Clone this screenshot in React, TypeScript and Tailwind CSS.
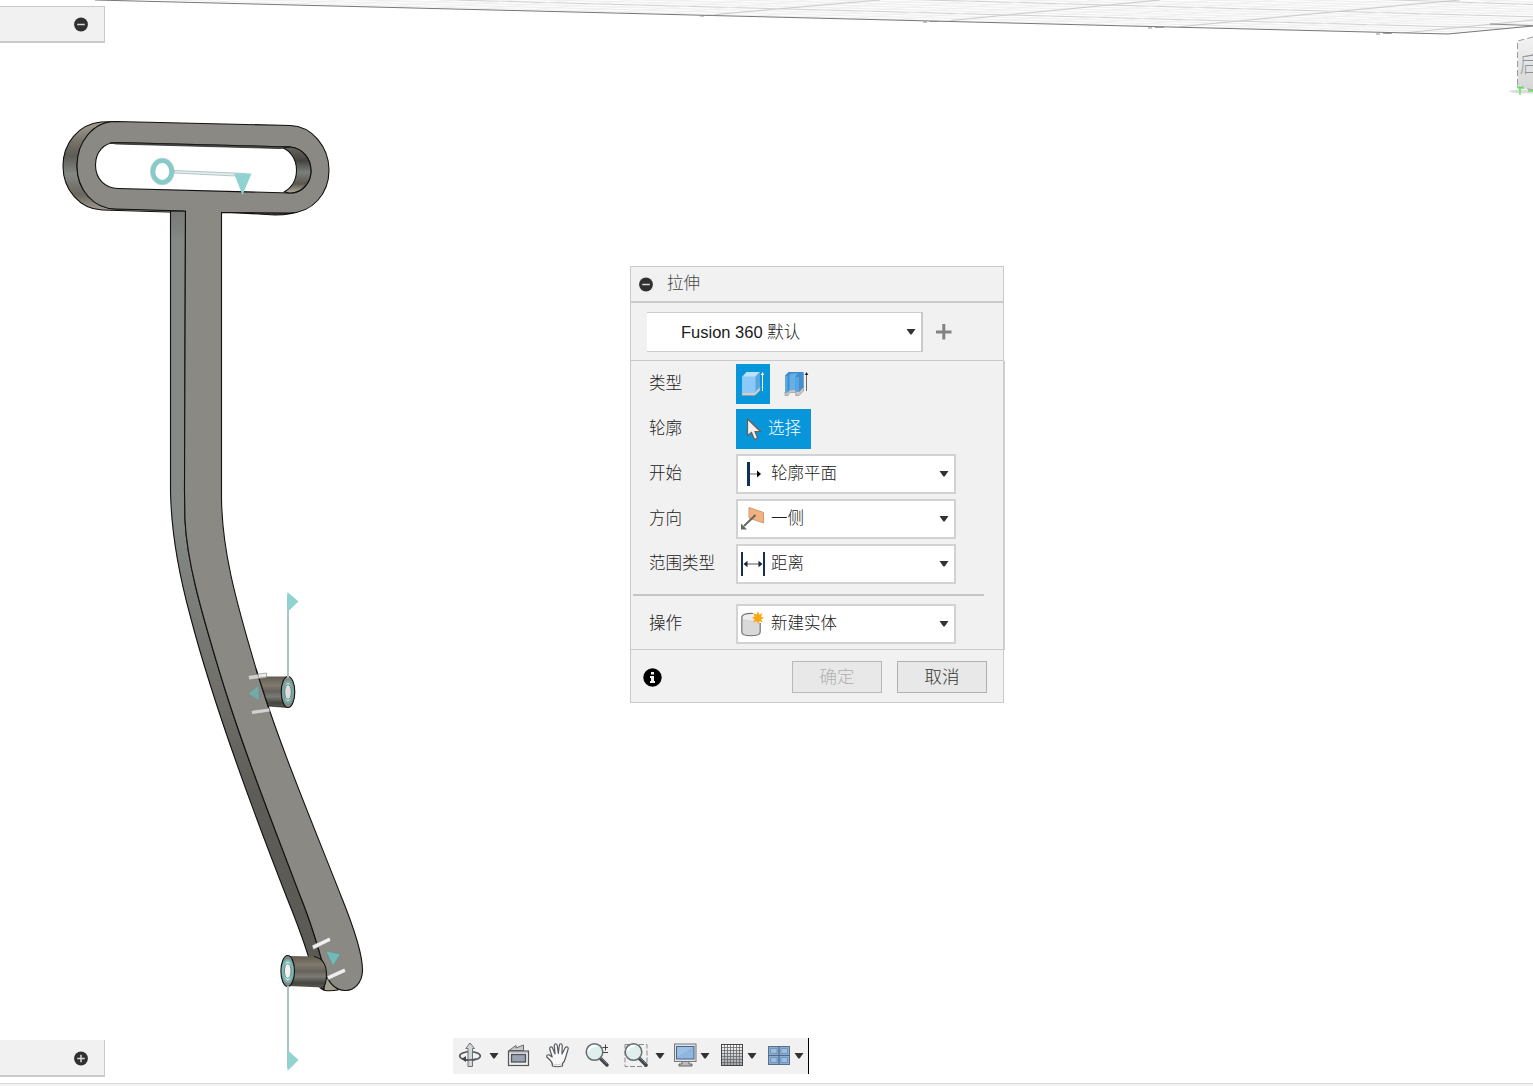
import React from "react";

const FONT = "font-['Liberation_Sans','Noto_Sans_CJK_SC',sans-serif]";

function Caret() {
  return (
    <svg className="block shrink-0" width="10" height="6" viewBox="0 0 10 6">
      <path d="M0.5 0H9.5L5.6 5.6H4.4Z" fill="#333" />
    </svg>
  );
}

function RoundToggle({ plus = false }: { plus?: boolean }) {
  return (
    <svg className="block shrink-0 translate-y-[0.5px]" width="16" height="16" viewBox="0 0 16 16">
      <circle cx="8" cy="8" r="6.9" fill="#303030" />
      <path d={plus ? "M4.2 8H11.8M8 4.2V11.8" : "M4.2 8H11.8"} stroke="#d8d8d8" strokeWidth="1.5" />
    </svg>
  );
}

function Grid() {
  const rows = Array.from({ length: 17 }, (_, i) => i);
  const dashes = [
    [702, 16], [925, 22], [1150, 28], [1378, 34],
  ];
  return (
    <g fill="none">
      <clipPath id="floor">
        <path d="M100 -1L1448 34L1533 26V-1Z" />
      </clipPath>
      <g clipPath="url(#floor)">
        <path d="M100 -1L1448 34L1533 26V-1Z" fill="#fcfcfc" />
        {rows.map((i) => (
          <path
            key={"a" + i}
            d={`M${130 + i * 95} ${-1}L1533 ${36.4 - i * 2.45}`}
            stroke={i % 5 === 3 ? "#cacaca" : "#ebebeb"}
            strokeWidth={i % 5 === 3 ? 0.9 : 0.8}
          />
        ))}
        {rows.concat([17, 18, 19, 20, 21, 22]).map((i) => (
          <path
            key={"b" + i}
            d={`M${300 + i * 46} ${4 + i * 1.2}l420 -41`}
            stroke="#ededed"
            strokeWidth="0.8"
          />
        ))}
        <path d="M715 14.500L880 0M951 20.500L1160 0M1180 26.700L1400 5.500L1460 0M1403 33L1533 20" stroke="#c6c6c6" strokeWidth="0.9" />
      </g>
      <path d="M95 0L1400 32.800L1448 34L1533 26" stroke="#777" />
      <path d="M1490 24L1533 25.600" stroke="#888" />
      {dashes.map(([x, y]) => (
        <path key={x} d={`M${x - 2} ${y}h4m3 -.6h9`} stroke="#888" strokeWidth=".9" />
      ))}
    </g>
  );
}

function Model() {
  return (
    <g stroke="#111" strokeWidth="1.1" strokeLinejoin="round">
      <path d="M116 121.500L101 122C79 124 63 143 63 166C63 190 80 209 102 210L184 212.500V210.500L116 209C94 209 77 190 77 166C77 142 93 121.500 116 121.500Z" fill="url(#capSide)" />
      <path d="M222 212L275 215Q292 215 302 210L289 213Z" fill="#4a4945" />
      <path d="M319 985Q320 993 338 990L330 975Z" fill="#a39e92" />
      <path
        d="M170.500 211V490C171 530 177 567 190 615C212 700 251 806 287 898Q300 930 308 955Q312 980 324 990L325 972C318 946 310 920 301 898C270 817 240 740 219 670C200 607 187 561 185 520L184.500 490L185.500 211Z"
        fill="url(#armSide)"
      />
      <path
        fillRule="evenodd"
        fill="#8b8983"
        d="M116 121.500L290 125.500C312 126 329 147 329 170C329 194 312 213 289 213L221.500 212.500V498C222 548 234 595 257 672C279 744 314 827 341 896Q363 950 362.500 971C362 983 354 991 345 990.500C336 990 329 984 325 972C318 946 310 920 301 898C270 817 240 740 219 670C200 607 187 561 185 520L184.500 490L185.500 211L116 209C94 209 77 190 77 166C77 142 93 121.500 116 121.500Z
        M116 142.500L290 147C303 148 311 159 311 171C311 183 302 193 290 193L118 188.500C105 188 95.500 179 95.500 165C95.500 152 104 142.500 116 142.500Z"
      />
      <path d="M280 147L290 147C303 148 311 159 311 171C311 183 302 193 290 193L284 192C293 187 296.500 180 296.500 170C296.500 158 289 149 280 147Z" fill="url(#slotSide)" />
      <path d="M110 142.800L116 144L280 148.500L290 147L116 142.500Z" fill="#55534f" strokeWidth=".7" />

      <path d="M257.500 676.500L288 676.500V707.500L267.500 706Z" fill="url(#pin)" stroke="none" />
      <path d="M256 669L269 709" fill="none" />
      <path d="M268 706L288 707.500" fill="none" strokeWidth=".6" />
      <ellipse cx="288" cy="692" rx="6.800" ry="15.500" fill="#8b8983" />
      <path d="M288 956L316 956.500Q327 961 326.500 976Q326 985 323 987.500L288 986Z" fill="url(#pin)" stroke="none" />
      <path d="M314 956.500Q327 959 326.500 976Q326 985 323 987.500" fill="none" />
      <ellipse cx="287.700" cy="971" rx="6.800" ry="15.500" fill="#858985" />
    </g>
  );
}

function Markers() {
  return (
    <g>
      <path d="M174 170.500L246 173.500V176.500L174 173Z" fill="#e1eceb" stroke="#a5bdbc" strokeWidth=".8" />
      <ellipse cx="162.300" cy="171.500" rx="9.300" ry="10.700" fill="#fff" stroke="#a9b5b4" strokeWidth="6" opacity=".6" />
      <ellipse cx="162.300" cy="171.500" rx="9.300" ry="10.700" fill="#fff" stroke="#86cbca" strokeWidth="4.600" />
      <path d="M234 173.500H251.500L242.500 195Z" fill="#8fd3d1" />

      <path d="M288 594V678M288 986V1068" stroke="#adc2c3" strokeWidth="2" />
      <path d="M287.500 592L298.500 601.500L287.500 612ZM287.500 1050L298.500 1060L287.500 1071Z" fill="#91d3d1" />
      <g strokeWidth="2.500">
        <ellipse cx="288" cy="692" rx="4.700" ry="10.500" fill="#dedfdd" stroke="#70aaa7" />
        <ellipse cx="287.700" cy="971" rx="4.700" ry="10.500" fill="#f3f3f3" stroke="#70bdb9" />
      </g>
      <g fill="none" stroke="#666" strokeWidth=".8">
        <ellipse cx="288" cy="692" rx="3.300" ry="7.500" />
        <ellipse cx="287.700" cy="971" rx="3.300" ry="7.500" />
      </g>
      <path d="M248 693.500L259 685V701Z" fill="#72aaa7" stroke="#728783" strokeWidth=".6" />
      <path d="M326 951L340.500 954L333 966Z" fill="#70bbb8" stroke="#678a87" strokeWidth=".6" />
      <g stroke="#777" strokeWidth=".6">
        <path d="M248 675.500L266.500 673V677.500L249 680Z" fill="#e8e8e5" fillOpacity=".75" />
        <path d="M251 710.500L269.500 708V712L252 714.500Z" fill="#d2d2cf" />
        <path d="M312 945.500L329.500 937L331 941L313.500 949.500Z" fill="#eee" />
        <path d="M327 976L344.500 968L346 972L328.500 980Z" fill="#eee" />
      </g>
    </g>
  );
}

function Viewport() {
  return (
    <svg className="absolute inset-0 block" width="1533" height="1086" viewBox="0 0 1533 1086">
      <defs>
        <linearGradient id="capSide" x1="0" y1="0" x2="0" y2="1">
          <stop offset="0" stopColor="#a5a091" />
          <stop offset=".22" stopColor="#777268" />
          <stop offset=".38" stopColor="#5e5c57" />
          <stop offset=".58" stopColor="#858983" />
          <stop offset=".8" stopColor="#69665e" />
          <stop offset="1" stopColor="#aaa495" />
        </linearGradient>
        <linearGradient id="slotSide" x1="0" y1="0" x2="0" y2="1">
          <stop offset="0" stopColor="#69655c" />
          <stop offset=".3" stopColor="#45433f" />
          <stop offset=".55" stopColor="#7b7f7b" />
          <stop offset=".8" stopColor="#5c5850" />
          <stop offset="1" stopColor="#b5ae9f" />
        </linearGradient>
        <linearGradient id="armSide" x1="0" y1="211" x2="0" y2="992" gradientUnits="userSpaceOnUse">
          <stop offset="0" stopColor="#777a77" />
          <stop offset=".04" stopColor="#858a86" />
          <stop offset=".4" stopColor="#858a86" />
          <stop offset=".62" stopColor="#706f6a" />
          <stop offset=".75" stopColor="#5e5c57" />
          <stop offset="1" stopColor="#5b5953" />
        </linearGradient>
        <linearGradient id="pin" x1="0" y1="0" x2="0" y2="1">
          <stop offset="0" stopColor="#625b51" />
          <stop offset=".28" stopColor="#817a6d" />
          <stop offset=".48" stopColor="#66625b" />
          <stop offset=".65" stopColor="#7b7b76" />
          <stop offset=".85" stopColor="#464540" />
          <stop offset="1" stopColor="#5a564f" />
        </linearGradient>
        <linearGradient id="cubeFace" x1="0" y1="0" x2="0" y2="1">
          <stop offset="0" stopColor="#f3f3f3" />
          <stop offset="1" stopColor="#d6d6d6" />
        </linearGradient>
      </defs>
      <Grid />
      <Model />
      <Markers />
      <ellipse cx="1533" cy="91.500" rx="24" ry="2" fill="#ccc" opacity=".7" />
      <path d="M1533 37V90L1517.500 87V41Z" fill="url(#cubeFace)" />
      <path d="M1533 37L1517.500 41V87L1533 90" fill="none" stroke="#999" strokeDasharray="6 3" />
      <text x="1520" y="72" fontSize="22" fill="#8b9199" fontWeight="300" fontFamily="Noto Sans CJK SC, sans-serif" transform="translate(1520 0) scale(.75 1) translate(-1520 0)">后</text>
      <path d="M1517 86L1520 90L1523 86M1520 90V95M1528 91H1533" stroke="#54f054" strokeWidth="1.300" fill="none" />
    </svg>
  );
}

function Combo({ icon, label }: { icon: React.ReactNode; label: string }) {
  return (
    <div className="flex h-10 w-[220px] items-center border-2 border-[#d2d2d2] bg-white pr-[5.5px] pl-[1px]">
      {icon}
      <span className="ml-[6px] flex-1 -translate-y-px">{label}</span>
      <Caret />
    </div>
  );
}

function Row({ label, children }: { label: string; children: React.ReactNode }) {
  return (
    <div className="flex h-[45px] items-center">
      <span className="w-[87px] -translate-y-px">{label}</span>
      {children}
    </div>
  );
}

const box = "block h-[26px] w-[26px] shrink-0";

function SolidIcon() {
  return (
    <svg className={box} viewBox="0 0 26 26">
      <path d="M2 21V24.500H15L20 19.500V15Z" fill="#d2d1cf" stroke="#99958f" strokeWidth=".6" />
      <path d="M2 6L6.500 1H20L15.500 6Z" fill="#bce2fb" />
      <path d="M15 6L20 1V16L15 21.500Z" fill="#5aa7dd" />
      <rect x="2" y="5.500" width="13.500" height="16.500" rx="1" fill="#8ac9fa" />
      <path d="M22.500 20V2" stroke="#fff" />
      <path d="M20.800 4L22.500 1L24.200 4Z" fill="#fff" />
    </svg>
  );
}

function ThinIcon() {
  return (
    <svg className={box} viewBox="0 0 26 26">
      <path d="M2 21V24.500H5L7 21.500H13L12.500 24.500H16L20.500 20V15L12 18Z" fill="#c9c7c3" stroke="#908c86" strokeWidth=".6" />
      <path d="M2 4.500L5.500 1H20.500V16L16 21H12.500V19H6.500L4.500 21.500H2Z" fill="#3f8ecb" />
      <path d="M6.500 4L8.500 2.500H15L12.500 5V19H6.500Z" fill="#67b0e7" />
      <path d="M16.500 5.500L20.500 1.500V16L16.500 20.500Z" fill="#4590cc" />
      <path d="M12.500 6H16V21H12.500Z" fill="#5ba6e0" />
      <path d="M2 5H4.500V21.500H2Z" fill="#60aae2" />
      <path d="M23.500 20V3" stroke="#666" />
      <path d="M21.700 4L23.500 1L25.300 4Z" fill="#222" />
    </svg>
  );
}

function StartIcon() {
  return (
    <svg className={box} viewBox="0 0 26 26">
      <path d="M9.500 1V25" stroke="#122e5c" strokeWidth="3" />
      <path d="M11 13H20" stroke="#666" />
      <path d="M18 9.500L22 13L18 16.500Z" fill="#000" />
    </svg>
  );
}

function SideIcon() {
  return (
    <svg className={box} viewBox="0 0 26 26">
      <path d="M10 1.500L24.500 6.500V17L10 12Z" fill="#f2b183" stroke="#d79768" />
      <path d="M16.500 9L5 20" stroke="#666" strokeWidth="2" />
      <path d="M2 17.500V23.500H8Z" fill="#666" />
    </svg>
  );
}

function DistanceIcon() {
  return (
    <svg className={box} viewBox="0 0 26 26">
      <path d="M3 1V25M25 1V25" stroke="#122e5c" strokeWidth="2" />
      <path d="M6 13H22" stroke="#555" />
      <path d="M4.500 13L8.500 9.800V16.200ZM23.500 13L19.500 9.800V16.200Z" fill="#1e2737" />
    </svg>
  );
}

function BodyIcon() {
  return (
    <svg className={box} viewBox="0 0 26 26">
      <path d="M2.800 6V21C3 26 21 26 21.200 21V6Z" fill="#d9d9d9" />
      <ellipse cx="12" cy="6" rx="9.200" ry="3.300" fill="#eee" />
      <path d="M14 2.500Q4 2 2.800 6V21C3 26 21 26 21.200 21V12" fill="none" stroke="#70757a" strokeWidth="1.200" />
      <path d="M19 0L20.300 3.700L23.700 2L22 5.600L25 7L22 8.200L23.700 11.500L20.300 9.900L19 13L17.700 9.900L14.200 11.500L15.800 8.200L12.800 7L15.800 5.600L14.200 2L17.700 3.700Z" fill="#fba60b" />
    </svg>
  );
}

function ExtrudeDialog() {
  return (
    <section className="absolute top-[266px] left-[630px] flex h-[437px] w-[374px] flex-col border border-[#cacaca] bg-[#f1f1f1] text-[16.5px] leading-6 font-light text-[#202020]">
      <header className="flex h-[36px] shrink-0 items-center border-b-2 border-[#cacaca] pl-[7px] text-[#444]">
        <RoundToggle />
        <span className="ml-[13px] -translate-y-px">拉伸</span>
      </header>
      <div className="flex h-[58px] shrink-0 items-center border-b border-[#cacaca] pt-px pl-4">
        <div className="flex h-10 w-[276px] items-center border-y border-r-2 border-[#cacaca] bg-white pr-[5.5px] pl-[34px]">
          <span className="flex-1"><span className="font-normal">Fusion 360 </span>默认</span>
          <Caret />
        </div>
        <svg className="ml-[13px] block" width="16" height="16" viewBox="0 0 16 16">
          <path d="M0 8H15.500M7.800 0V15.500" stroke="#838383" strokeWidth="3" />
        </svg>
      </div>
      <div className="-mr-[2px] flex h-[289px] shrink-0 flex-col border-r-2 border-b border-[#cdcdcd] bg-[#f1f1f1] pl-[18px]">
        <Row label="类型">
          <div className="flex h-10 w-[34px] items-center justify-center bg-[#0896db]"><SolidIcon /></div>
          <div className="ml-[13px]"><ThinIcon /></div>
        </Row>
        <Row label="轮廓">
          <button className="flex h-10 w-[75px] items-center bg-[#0896db] pl-[10px] text-white">
            <svg className="block" width="16" height="24" viewBox="0 0 16 24">
              <path d="M1.500 2V18.500L5.500 15.500L8.500 22.500L11.500 21L9 14.500H14.500Z" fill="#f2f0ed" stroke="#665f5b" strokeWidth="1.200" />
            </svg>
            <span className="ml-[6px] -translate-y-px">选择</span>
          </button>
        </Row>
        <Row label="开始"><Combo icon={<StartIcon />} label="轮廓平面" /></Row>
        <Row label="方向"><Combo icon={<SideIcon />} label="一侧" /></Row>
        <Row label="范围类型"><Combo icon={<DistanceIcon />} label="距离" /></Row>
        <div className="mt-[8px] -ml-4 h-[2px] w-[351px] shrink-0 bg-[#c5c5c5]" />
        <div className="mt-[5px]"><Row label="操作"><Combo icon={<BodyIcon />} label="新建实体" /></Row></div>
      </div>
      <footer className="flex flex-1 items-center pt-[2px] pl-3">
        <svg className="block" width="19" height="19" viewBox="0 0 19 19">
          <circle cx="9.500" cy="9.500" r="9.200" fill="#000" />
          <path d="M8 4H11V6.500H8ZM7 8H11V13H12V15H7V13H8V10H7Z" fill="#f1f1f1" />
        </svg>
        <button className="ml-[130px] h-8 w-[90px] border-[1.5px] border-[#b8b8b8] bg-[#e8e8e8] pb-[1px] text-[17.5px] leading-6 text-[#b0b0b0]">确定</button>
        <button className="ml-[15px] h-8 w-[90px] border-[1.5px] border-[#b0b0b0] bg-[#e8e8e8] pb-[1px] text-[17.5px] leading-6 text-[#333]">取消</button>
      </footer>
    </section>
  );
}

const tool = "block h-[26px] w-[26px] shrink-0";

function OrbitIcon() {
  return (
    <svg className={tool} viewBox="0 0 26 26">
      <ellipse cx="13" cy="14" rx="10.300" ry="4.200" fill="none" stroke="#555" strokeWidth="1.600" />
      <path d="M13 1L8.800 6.500H11V24.500H15.500V6.500H17.500Z" fill="#d4d7da" stroke="#6d7277" />
      <path d="M6 17Q12 19 19 17" fill="none" stroke="#555" strokeWidth="1.500" />
      <path d="M9 14L4.500 17L9 20Z" fill="#444" />
    </svg>
  );
}

function LookIcon() {
  return (
    <svg className={tool} viewBox="0 0 26 26">
      <path d="M3 8.500L10 3.500V6L17.500 3V8.500Z" fill="#c8cacc" stroke="#666" />
      <rect x="2.500" y="9" width="20" height="14.500" fill="#eee" stroke="#555" strokeWidth="1.200" />
      <path d="M3 10.500H22" stroke="#aaa" strokeWidth=".7" />
      <rect x="5.500" y="12.500" width="14" height="7.500" fill="#9ba3af" stroke="#4c535c" strokeWidth="1.300" />
    </svg>
  );
}

function HandIcon() {
  return (
    <svg className={tool} viewBox="0 0 26 26">
      <path d="M7.500 24Q7.500 20.500 5.500 18.500L1.800 15Q1.300 12.500 4 12.800L7.200 15L4.800 7.500C4.300 4.500 7 4 7.800 6.500L10 12L9.300 4C9.300 1 12 1 12.300 4L13.300 11.500L14.300 3.500C14.800 1 17.300 1.200 17.200 4L17 12L20 6C21.500 4 23.800 5 23 7.500L20.300 16.500Q19.500 20 17.500 21.500V24Q12 25.500 7.500 24Z" fill="#f8f8f8" stroke="#555b61" strokeWidth="1.200" strokeLinejoin="round" />
      <path d="M9 22.500Q13 23.500 16.500 22" stroke="#ccc" fill="none" />
    </svg>
  );
}

function Lens({ window = false }: { window?: boolean }) {
  return (
    <svg className={tool} viewBox="0 0 26 26">
      {window && <rect x="2" y="2.500" width="22" height="22" fill="none" stroke="#8b8b8b" strokeDasharray="5 2" />}
      <path d="M16.500 16.500L23 23" stroke="#3f4347" strokeWidth="3.500" strokeLinecap="round" />
      <path d="M17 16L23 22" stroke="#858a8e" strokeWidth=".8" />
      <circle cx="10.500" cy="10" r="8.300" fill="#e0eeee" stroke="#666d70" strokeWidth="1.500" />
      <path d="M4.500 9Q6 3.500 12 4" stroke="#fff" strokeWidth="2" fill="none" />
      {!window && <path d="M18.500 5.500H24M21.500 2.500V8.500M19 10.500H24" stroke="#444" />}
    </svg>
  );
}

function ScreenIcon() {
  return (
    <svg className={tool} viewBox="0 0 26 26">
      <path d="M10 19H17V22H20V24H7V22H10Z" fill="#bbb" stroke="#666" />
      <rect x="2.500" y="2" width="21.500" height="17.500" fill="#e3e4e5" stroke="#777" />
      <rect x="4.500" y="4.500" width="17.500" height="12.500" fill="#8fb6df" stroke="#45658a" />
      <path d="M5 5H21L5 15Z" fill="#acc9e7" opacity=".5" />
    </svg>
  );
}

function MeshIcon() {
  const steps = [5, 8, 11, 14, 17, 20];
  return (
    <svg className={tool} viewBox="0 0 26 26">
      <defs><linearGradient id="mesh" x2="0" y2="1"><stop stopColor="#fff" /><stop offset="1" stopColor="#9da2aa" /></linearGradient></defs>
      <rect x="2.500" y="2.500" width="21" height="21" fill="url(#mesh)" stroke="#444" />
      {steps.map((n) => <path key={n} d={`M${n + 0.5} 3V23M3 ${n + 0.5}H23`} stroke="#666" strokeWidth=".8" />)}
    </svg>
  );
}

function PanesIcon() {
  return (
    <svg className={tool} viewBox="0 0 26 26">
      <rect x="2.500" y="4.500" width="21" height="18" fill="#89aed5" stroke="#5c6f85" />
      <path d="M13 4.500V22.500M2.500 13.500H23.500" stroke="#4d6785" strokeWidth="1.200" />
      <path d="M4.500 6.500H11V11.500H4.500ZM15 6.500H21.500V11.500H15ZM4.500 15.500H11V20.500H4.500ZM15 15.500H21.500V20.500H15Z" fill="#9bbde1" stroke="#6587ab" strokeWidth=".7" />
    </svg>
  );
}

function NavBar() {
  return (
    <nav className="absolute top-[1038px] left-[453px] flex h-9 w-[356px] items-center border-r border-black bg-[#f1f1f1] pb-[3px] pl-[3.5px]">
      <OrbitIcon />
      <span className="ml-[6px] pt-[3px]"><Caret /></span>
      <span className="ml-[7px]"><LookIcon /></span>
      <span className="ml-[13px]"><HandIcon /></span>
      <span className="ml-[13px]"><Lens /></span>
      <span className="ml-[13px]"><Lens window /></span>
      <span className="ml-[6px] pt-[3px]"><Caret /></span>
      <span className="ml-[7px]"><ScreenIcon /></span>
      <span className="ml-[2px] pt-[3px]"><Caret /></span>
      <span className="ml-[9px]"><MeshIcon /></span>
      <span className="ml-[2px] pt-[3px]"><Caret /></span>
      <span className="ml-[9px]"><PanesIcon /></span>
      <span className="ml-[2px] pt-[3px]"><Caret /></span>
    </nav>
  );
}

export default function App() {
  return (
    <main className={`relative h-[1086px] w-[1533px] overflow-hidden bg-white ${FONT}`}>
      <Viewport />
      <div className="absolute top-[6px] left-0 flex h-[37px] w-[105px] items-center justify-end border-t border-r border-b-2 border-[#cacaca] bg-[#f1f1f1] pr-[15px]">
        <RoundToggle />
      </div>
      <div className="absolute top-[1040px] left-0 flex h-[37px] w-[105px] items-center justify-end border-r border-b-2 border-[#cacaca] bg-[#f1f1f1] pr-[15px]">
        <RoundToggle plus />
      </div>
      <ExtrudeDialog />
      <NavBar />
      <div className="absolute bottom-0 left-0 h-[3px] w-full border-t border-[#dadada] bg-[#f3f3f3]" />
    </main>
  );
}
